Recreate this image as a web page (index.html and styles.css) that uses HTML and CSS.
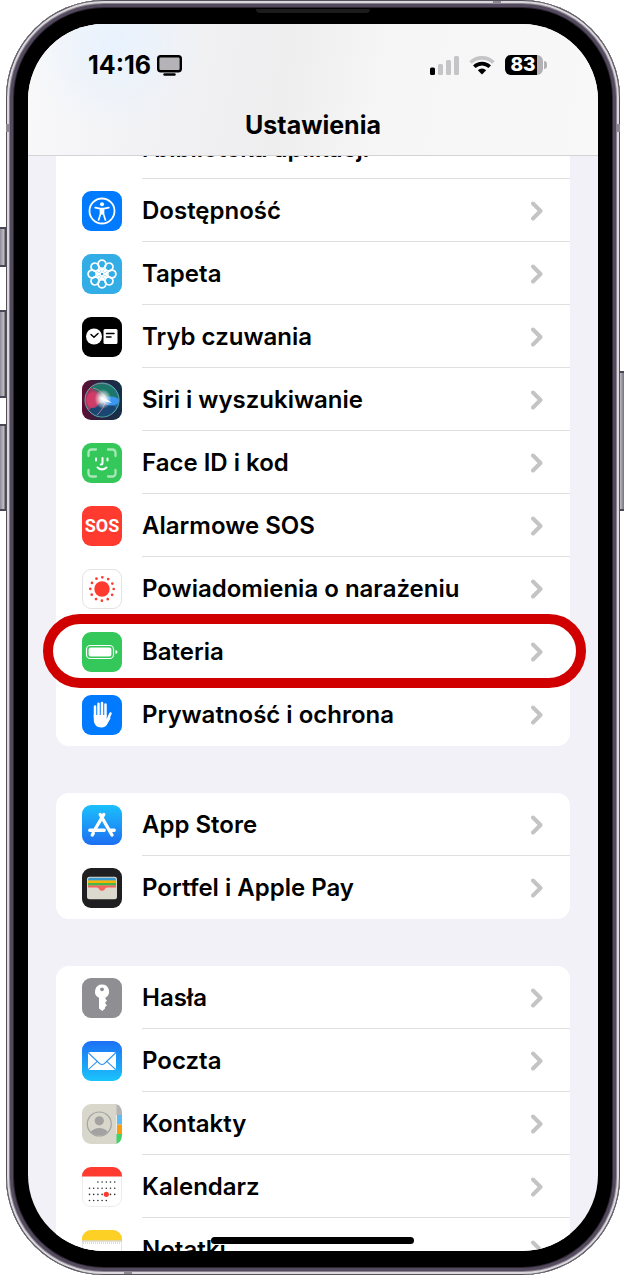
FILE: index.html
```html
<!DOCTYPE html>
<html lang="pl">
<head>
    <meta charset="UTF-8">
    <meta name="viewport" content="width=device-width, initial-scale=1.0">
    <title>Ustawienia</title>
    <link rel="stylesheet" href="styles.css">
</head>
<body>
    <svg width="0" height="0" class="defs" aria-hidden="true">
        <defs>
            <linearGradient id="blueDown" x1="0" y1="0" x2="0" y2="1">
                <stop offset="0" stop-color="#1bc0fc"/>
                <stop offset="1" stop-color="#1d6ff2"/>
            </linearGradient>
            <linearGradient id="blueUp" x1="0" y1="0" x2="0" y2="1">
                <stop offset="0" stop-color="#1d70f4"/>
                <stop offset="1" stop-color="#1bc4fc"/>
            </linearGradient>
            <linearGradient id="siriBg" x1="0" y1="0" x2="1" y2="0">
                <stop offset="0" stop-color="#5e0f33"/>
                <stop offset="0.45" stop-color="#2b2240"/>
                <stop offset="1" stop-color="#13314a"/>
            </linearGradient>
            <linearGradient id="siriOrb" x1="0" y1="0.3" x2="1" y2="0.6">
                <stop offset="0" stop-color="#b8234f"/>
                <stop offset="0.35" stop-color="#8c5570"/>
                <stop offset="0.6" stop-color="#2d7e80"/>
                <stop offset="1" stop-color="#1e62a8"/>
            </linearGradient>
            <radialGradient id="siriGlow">
                <stop offset="0" stop-color="#fff"/>
                <stop offset="0.3" stop-color="#fff" stop-opacity="0.85"/>
                <stop offset="1" stop-color="#fff" stop-opacity="0"/>
            </radialGradient>
            <symbol id="chevron" viewBox="0 0 12 20">
                <path d="M2 2.500l7.500 7.500L2 17.500" fill="none" stroke="#c4c4c6" stroke-width="4" stroke-linecap="round" stroke-linejoin="round"/>
            </symbol>
        </defs>
    </svg>

    <div class="phone">
        <span class="side mute"></span>
        <span class="side vol-up"></span>
        <span class="side vol-down"></span>
        <span class="side power"></span>
        <span class="band band-left"></span>
        <span class="band band-right"></span>
        <span class="band band-top"></span>
        <span class="band band-bottom"></span>
        <span class="speaker"></span>

        <div class="screen">
            <header class="header">
                <div class="status">
                    <span class="time">14:16</span>
                    <svg class="monitor" width="25" height="21" viewBox="0 0 25 21">
                        <rect x="1.200" y="1.200" width="22.600" height="15" rx="2.500" fill="#b5b2b8" stroke="#000" stroke-width="2.400"/>
                        <path d="M7.500 19.500h10" stroke="#000" stroke-width="2.400" stroke-linecap="round"/>
                    </svg>
                    <div class="status-right">
                        <svg width="29" height="19" viewBox="0 0 29 19">
                            <rect x="0" y="11.500" width="5" height="7.500" rx="1.500"/>
                            <g fill="#c5c5c7">
                                <rect x="8" y="8" width="5" height="11" rx="1.500"/>
                                <rect x="16" y="4" width="5" height="15" rx="1.500"/>
                                <rect x="24" y="0" width="5" height="19" rx="1.500"/>
                            </g>
                        </svg>
                        <svg width="26" height="19" viewBox="0 0 26 19" fill="none">
                            <path d="M1.500 6.500a16.500 16.500 0 0 1 23 0" stroke="#c5c5c7" stroke-width="3.600"/>
                            <path d="M5.300 10.800a11 11 0 0 1 15.400 0" stroke="#000" stroke-width="3.600"/>
                            <path d="M13 18.500l-4.200-4.300a6 6 0 0 1 8.400 0z" fill="#000"/>
                        </svg>
                        <span class="battery"><span class="battery-level">83</span></span>
                    </div>
                </div>
                <h1>Ustawienia</h1>
            </header>

            <main class="list">
                <nav class="group">
                    <a class="row row-tall" href="#">
                        <span class="icon"></span>
                        <span class="label">Ekran początkowy<br>i biblioteka aplikacji</span>
                    </a>
                    <a class="row" href="#">
                        <svg class="icon" viewBox="0 0 40 40">
                            <rect width="40" height="40" rx="9" fill="#007aff"/>
                            <circle cx="20" cy="20" r="12.500" fill="none" stroke="#fff" stroke-width="1.800"/>
                            <circle cx="20" cy="13.300" r="2" fill="#fff"/>
                            <path d="M13.200 16.600l5 1h3.600l5-1M18.500 18v5l-1.900 6M21.500 18v5l1.900 6" fill="none" stroke="#fff" stroke-width="1.700" stroke-linecap="round" stroke-linejoin="round"/>
                            <path d="M18 17.400h4v6h-4z" fill="#fff"/>
                        </svg>
                        <span class="label">Dostępność</span>
                        <svg class="chevron"><use href="#chevron"/></svg>
                    </a>
                    <a class="row" href="#">
                        <svg class="icon" viewBox="0 0 40 40">
                            <rect width="40" height="40" rx="9" fill="#32ade6"/>
                            <g fill="none" stroke="#fff" stroke-width="1.800">
                                <g id="petals">
                                    <ellipse cx="20" cy="10.200" rx="3.900" ry="4.100"/>
                                    <ellipse cx="20" cy="29.800" rx="3.900" ry="4.100"/>
                                    <ellipse cx="10.200" cy="20" rx="4.100" ry="3.900"/>
                                    <ellipse cx="29.800" cy="20" rx="4.100" ry="3.900"/>
                                    <path d="M20 14.300v11.400M14.300 20h11.400"/>
                                </g>
                                <use href="#petals" transform="rotate(45 20 20)"/>
                                <circle cx="20" cy="20" r="4.500"/>
                            </g>
                            <circle cx="20" cy="20" r="1.800" fill="#32ade6" stroke="#fff"/>
                        </svg>
                        <span class="label">Tapeta</span>
                        <svg class="chevron"><use href="#chevron"/></svg>
                    </a>
                    <a class="row" href="#">
                        <svg class="icon" viewBox="0 0 40 40">
                            <rect width="40" height="40" rx="9"/>
                            <circle cx="12" cy="19.500" r="8" fill="#fff"/>
                            <path d="M9 17.500l3 2.700 4-3.700" fill="none" stroke="#000" stroke-width="1.500" stroke-linecap="round" stroke-linejoin="round"/>
                            <rect x="21.500" y="12" width="14" height="15" rx="1.500" fill="#fff"/>
                            <path d="M24.500 16.500h7.500M24.500 20h4.500" stroke="#000" stroke-width="1.500" stroke-linecap="round"/>
                        </svg>
                        <span class="label">Tryb czuwania</span>
                        <svg class="chevron"><use href="#chevron"/></svg>
                    </a>
                    <a class="row" href="#">
                        <svg class="icon" viewBox="0 0 40 40">
                            <rect width="40" height="40" rx="9" fill="url(#siriBg)"/>
                            <circle cx="20" cy="20" r="17" fill="url(#siriOrb)" stroke="#5cb3b0" stroke-width="1"/>
                            <path d="M9 8c7-6 17-5 23 2 3 4 4 8 2 9-8-1-13-5-25-11z" fill="#1c7768"/>
                            <path d="M7 30c4-4 8-6 14-8 6 1 11 3 13 6-6 11-20 11-27 2z" fill="#1a4673"/>
                            <ellipse cx="11" cy="20" rx="6.500" ry="8" fill="#d83b68" opacity="0.850"/>
                            <ellipse cx="29" cy="21" rx="8" ry="4.500" fill="#3b97ef"/>
                            <path d="M11 8c5 1 11 5 13 11-1 7-5 12-9 16" fill="none" stroke="#b77a92" stroke-width="1"/>
                            <ellipse cx="21" cy="19" rx="8.500" ry="10" fill="url(#siriGlow)"/>
                            <path d="M17 17l7 2 6 4-8-2z" fill="#fff"/>
                        </svg>
                        <span class="label">Siri i wyszukiwanie</span>
                        <svg class="chevron"><use href="#chevron"/></svg>
                    </a>
                    <a class="row" href="#">
                        <svg class="icon" viewBox="0 0 40 40">
                            <rect width="40" height="40" rx="9" fill="#34c759"/>
                            <g fill="none" stroke-linecap="round">
                                <path d="M6.500 13V9.500a3 3 0 0 1 3-3H14M26 6.500h4.500a3 3 0 0 1 3 3V13M33.500 27v3.500a3 3 0 0 1-3 3H26M14 33.500H9.500a3 3 0 0 1-3-3V27" stroke="#a9e7b8" stroke-width="2.300"/>
                                <path d="M14 15.500v2M25.500 15.500v2M20.500 15v5q0 1.500-1.700 1.500M15.500 24.500q4.500 3.800 9 0" stroke="#fff" stroke-width="2"/>
                            </g>
                        </svg>
                        <span class="label">Face ID i kod</span>
                        <svg class="chevron"><use href="#chevron"/></svg>
                    </a>
                    <a class="row" href="#">
                        <span class="icon sos">SOS</span>
                        <span class="label">Alarmowe SOS</span>
                        <svg class="chevron"><use href="#chevron"/></svg>
                    </a>
                    <a class="row" href="#">
                        <svg class="icon" viewBox="0 0 40 40">
                            <rect x="0.500" y="0.500" width="39" height="39" rx="8.500" fill="#fff" stroke="#e3e3e5"/>
                            <circle cx="20" cy="20" r="7.700" fill="#ff3b30"/>
                            <circle cx="20" cy="20" r="11.700" fill="none" stroke="#ff3b30" stroke-width="2.700" stroke-linecap="round" stroke-dasharray="0 6.126"/>
                        </svg>
                        <span class="label">Powiadomienia o narażeniu</span>
                        <svg class="chevron"><use href="#chevron"/></svg>
                    </a>
                    <a class="row marked" href="#">
                        <svg class="icon" viewBox="0 0 40 40">
                            <rect width="40" height="40" rx="9" fill="#34c759"/>
                            <rect x="4.500" y="13.500" width="27" height="13" rx="3.800" fill="none" stroke="#fff" stroke-width="1.200"/>
                            <rect x="6.600" y="15.500" width="22.800" height="9" rx="2" fill="#fff"/>
                            <path d="M33.500 18q2 .6 2 2t-2 2z" fill="#fff"/>
                        </svg>
                        <span class="label">Bateria</span>
                        <svg class="chevron"><use href="#chevron"/></svg>
                    </a>
                    <a class="row" href="#">
                        <svg class="icon" viewBox="0 0 40 40">
                            <rect width="40" height="40" rx="9" fill="#007aff"/>
                            <g fill="none" stroke="#fff" stroke-width="2.500" stroke-linecap="round">
                                <path d="M13 22V11.500M16.500 20V8.700M20 20V8M23.500 20V9.500M25.500 25l3-6.500"/>
                            </g>
                            <path d="M11.750 20h13v4.500l2.400-2.500 1.500 1-3 5.500c-1.200 2.500-3.300 4-6.200 4-5 0-7.700-3.300-7.700-8z" fill="#fff"/>
                        </svg>
                        <span class="label">Prywatność i ochrona</span>
                        <svg class="chevron"><use href="#chevron"/></svg>
                    </a>
                </nav>

                <nav class="group">
                    <a class="row" href="#">
                        <svg class="icon" viewBox="0 0 40 40">
                            <rect width="40" height="40" rx="9" fill="url(#blueDown)"/>
                            <g fill="none" stroke="#fff" stroke-width="3.400" stroke-linecap="round">
                                <path d="M21.800 9.500L13.500 23.500M11.300 28.200l-1 1.800M18.200 9.500L30 30"/>
                                <path d="M7.800 25.200h14.400M28.500 25.200h3.700"/>
                            </g>
                        </svg>
                        <span class="label">App Store</span>
                        <svg class="chevron"><use href="#chevron"/></svg>
                    </a>
                    <a class="row" href="#">
                        <svg class="icon" viewBox="0 0 40 40">
                            <rect width="40" height="40" rx="9" fill="#1f1f21"/>
                            <rect x="5" y="8.800" width="30" height="22.400" rx="2.500" fill="#dbd8cd"/>
                            <path d="M6 12.800v-1q0-2 2-2h24q2 0 2 2v1z" fill="#3a9bd0"/>
                            <path d="M6 12.500h28v2.700H6z" fill="#f7b500"/>
                            <path d="M6 15h28v2.700H6z" fill="#48b749"/>
                            <path d="M6 17.500h28v2h-9c-2 0-2 3.300-5 3.300s-3-3.300-5-3.300H6z" fill="#f5655c"/>
                        </svg>
                        <span class="label">Portfel i Apple Pay</span>
                        <svg class="chevron"><use href="#chevron"/></svg>
                    </a>
                </nav>

                <nav class="group">
                    <a class="row" href="#">
                        <svg class="icon" viewBox="0 0 40 40">
                            <rect width="40" height="40" rx="9" fill="#8e8e93"/>
                            <path d="M20 6.500a7 7 0 0 1 3.500 13.100V21l1.500 1.500-2 2.500 2 2.500-2 1.500v1.500L20.300 33 17 30.500V19.800A7 7 0 0 1 20 6.500z" fill="#fff"/>
                            <circle cx="20" cy="11.300" r="1.900" fill="#8e8e93"/>
                        </svg>
                        <span class="label">Hasła</span>
                        <svg class="chevron"><use href="#chevron"/></svg>
                    </a>
                    <a class="row" href="#">
                        <svg class="icon" viewBox="0 0 40 40">
                            <rect width="40" height="40" rx="9" fill="url(#blueUp)"/>
                            <rect x="6" y="11" width="28" height="18" rx="2.300" fill="#fff"/>
                            <path d="M6.500 12l11 10.500q2.500 2 5 0l11-10.500M6.500 28.300l9.300-8.500M33.500 28.300l-9.300-8.500" fill="none" stroke="#2f95f5" stroke-width="1.100"/>
                        </svg>
                        <span class="label">Poczta</span>
                        <svg class="chevron"><use href="#chevron"/></svg>
                    </a>
                    <a class="row" href="#">
                        <svg class="icon" viewBox="0 0 40 40">
                            <path d="M34 0q6 2 6 9v2h-6z" fill="#b5b4b2"/>
                            <path d="M35 11h5v9.500h-5z" fill="#5cbcf5"/>
                            <path d="M35 20.500h5V30h-5z" fill="#f99b0c"/>
                            <path d="M34 30h6v1q0 7-6 9z" fill="#45d169"/>
                            <path d="M9 0h25.500v40H9a9 9 0 0 1-9-9V9a9 9 0 0 1 9-9z" fill="#d9d7cc"/>
                            <circle cx="17.300" cy="20" r="12" fill="none" stroke="#a5a4a3" stroke-width="1.200"/>
                            <circle cx="17.300" cy="16.800" r="4.600" fill="#a3a2a1"/>
                            <path d="M8.800 27.800q3.500-3.700 8.500-3.700t8.500 3.700a11.500 11.500 0 0 1-17 0z" fill="#a3a2a1"/>
                        </svg>
                        <span class="label">Kontakty</span>
                        <svg class="chevron"><use href="#chevron"/></svg>
                    </a>
                    <a class="row" href="#">
                        <svg class="icon" viewBox="0 0 40 40">
                            <rect x="0.500" y="0.500" width="39" height="39" rx="8.500" fill="#fff" stroke="#ececee"/>
                            <path d="M0 9.500V9a9 9 0 0 1 9-9h22a9 9 0 0 1 9 9v.5z" fill="#ff3b30"/>
                            <g stroke="#333" stroke-width="1.600" stroke-linecap="round" stroke-dasharray="0 4.200">
                                <path d="M15.900 15h17M7.500 21.200h25.400M7.500 27.400h25.400M7.500 33.500h17"/>
                            </g>
                            <circle cx="24.300" cy="27.300" r="2.600" fill="#ff3b30"/>
                        </svg>
                        <span class="label">Kalendarz</span>
                        <svg class="chevron"><use href="#chevron"/></svg>
                    </a>
                    <a class="row" href="#">
                        <svg class="icon" viewBox="0 0 40 40">
                            <rect x="0.500" y="0.500" width="39" height="39" rx="8.500" fill="#fff" stroke="#e3e3e5"/>
                            <path d="M0 10.500V9a9 9 0 0 1 9-9h22a9 9 0 0 1 9 9v1.500z" fill="#fdd025"/>
                            <path d="M0 11h40" stroke="#c9c3b0"/>
                            <path d="M1 13h38" stroke="#bbb" stroke-dasharray="1 1"/>
                        </svg>
                        <span class="label">Notatki</span>
                        <svg class="chevron"><use href="#chevron"/></svg>
                    </a>
                </nav>
            </main>
            <span class="home-bar"></span>
        </div>
    </div>
</body>
</html>
```
FILE: styles.css
```css
* {
    box-sizing: border-box;
}
body {
    margin: 0;
    padding: 0 4px 5px 6px;
    height: 100vh;
    background: #fff;
    color: #000;
    font-family: Inter, "Liberation Sans", sans-serif;
    overflow: hidden;
}
.defs {
    position: absolute;
}

/* phone body */
.phone {
    position: relative;
    height: 100%;
    padding: 24px 22px;
    background: #000;
    border-radius: 98px;
    box-shadow: inset 0 0 0 1px #55505c, inset 0 0 0 3px #dad8da, inset 0 0 0 4px #8a8391, inset 0 0 0 7px #544a5e, inset 0 0 0 8px #2c2633;
}
.side {
    position: absolute;
    left: -6px;
    width: 6px;
    background: linear-gradient(to right, #8f8b95, #bdbac2 60%, #2f2b36);
    border-top: 2px solid #4b4654;
    border-bottom: 2px solid #4b4654;
}
.mute {
    top: 227px;
    height: 40px;
}
.vol-up {
    top: 310px;
    height: 88px;
}
.vol-down {
    top: 424px;
    height: 87px;
}
.power {
    top: 371px;
    left: auto;
    right: -4px;
    width: 4px;
    height: 140px;
    background: linear-gradient(to left, #77727e, #bdbac2);
}

/* antenna bands */
.band {
    position: absolute;
    width: 3px;
    height: 8px;
    background: #8d8794;
}
.band-left {
    top: 124px;
    left: 0;
}
.band-right {
    top: 124px;
    right: 0;
}
.band-top {
    top: 1px;
    right: 119px;
    width: 8px;
    height: 3px;
}
.band-bottom {
    bottom: 1px;
    left: 118px;
    width: 8px;
    height: 3px;
}
.speaker {
    position: absolute;
    top: 9px;
    left: 250px;
    right: 250px;
    height: 4px;
    background: #1c1c1c;
    border-radius: 0 0 4px 4px;
}

.screen {
    position: relative;
    display: flex;
    flex-direction: column;
    height: 100%;
    background: #f2f1f7;
    border-radius: 76px;
    overflow: hidden;
}

/* header */
.header {
    padding: 24px 0 13px;
    background: radial-gradient(circle at 15% 15%, #e8f2fd, rgba(240, 241, 245, 0) 90px), linear-gradient(100deg, #f9f9fa, #f2f2f5 22%, #eeeeef 45%, #f6f6f6 62%, #f8f8f8);
    border-bottom: 1px solid #d4d4d6;
}
.status {
    display: flex;
    align-items: center;
    gap: 6px;
    height: 34px;
    padding: 0 51px 0 60px;
}
.time {
    font-size: 25px;
    font-weight: 700;
}
.status-right {
    display: flex;
    align-items: center;
    gap: 10px;
    margin-left: auto;
}
.battery {
    position: relative;
    width: 38px;
    height: 20px;
    margin-right: 4px;
    background: #b3b1b5;
    border-radius: 6px;
}
.battery::after {
    content: "";
    position: absolute;
    top: 6px;
    right: -4px;
    width: 3px;
    height: 8px;
    background: #b3b1b5;
    border-radius: 0 4px 4px 0;
}
.battery-level {
    display: block;
    width: 32px;
    padding-left: 4px;
    background: #000;
    border-radius: 6px 0 0 6px;
    color: #fff;
    font-size: 19px;
    font-weight: 800;
    line-height: 20px;
    text-align: center;
}
h1 {
    margin: 27px 0 0;
    font-size: 25px;
    font-weight: 700;
    line-height: 33px;
    text-align: center;
}

/* settings list */
.list {
    flex: 1;
    min-height: 0;
    padding: 0 28px;
    overflow: hidden;
}
.group {
    margin-bottom: 47px;
    background: #fff;
    border-radius: 13px;
}
.group:first-child {
    margin-top: -67px;
}
.row {
    position: relative;
    display: flex;
    align-items: center;
    gap: 20px;
    height: 63px;
    padding: 0 27px 0 26px;
    color: #000;
    text-decoration: none;
}
.row-tall {
    height: 90px;
}
.row::after {
    content: "";
    position: absolute;
    left: 86px;
    right: 0;
    bottom: 0;
    height: 1px;
    background: #dfdfe1;
}
.row:last-child::after,
.marked::after {
    display: none;
}
.icon {
    position: relative;
    flex: none;
    width: 40px;
    height: 40px;
}
.sos {
    background: #ff3b30;
    border-radius: 9px;
    color: #fff;
    font-family: Roboto, sans-serif;
    font-size: 18px;
    font-weight: 700;
    line-height: 40px;
    text-align: center;
}
.label {
    position: relative;
    flex: 1;
    font-size: 24px;
    font-weight: 600;
    line-height: 30px;
    white-space: nowrap;
}
.chevron {
    position: relative;
    width: 12px;
    height: 20px;
}

/* red frame round the battery row */
.marked::before {
    content: "";
    position: absolute;
    top: -6px;
    right: -16px;
    bottom: -5px;
    left: -13px;
    background: #fff;
    border: 10px solid #d00000;
    border-radius: 37px;
}

.home-bar {
    position: absolute;
    left: 183px;
    right: 184px;
    bottom: 7px;
    height: 7px;
    background: #000;
    border-radius: 4px;
}
```
